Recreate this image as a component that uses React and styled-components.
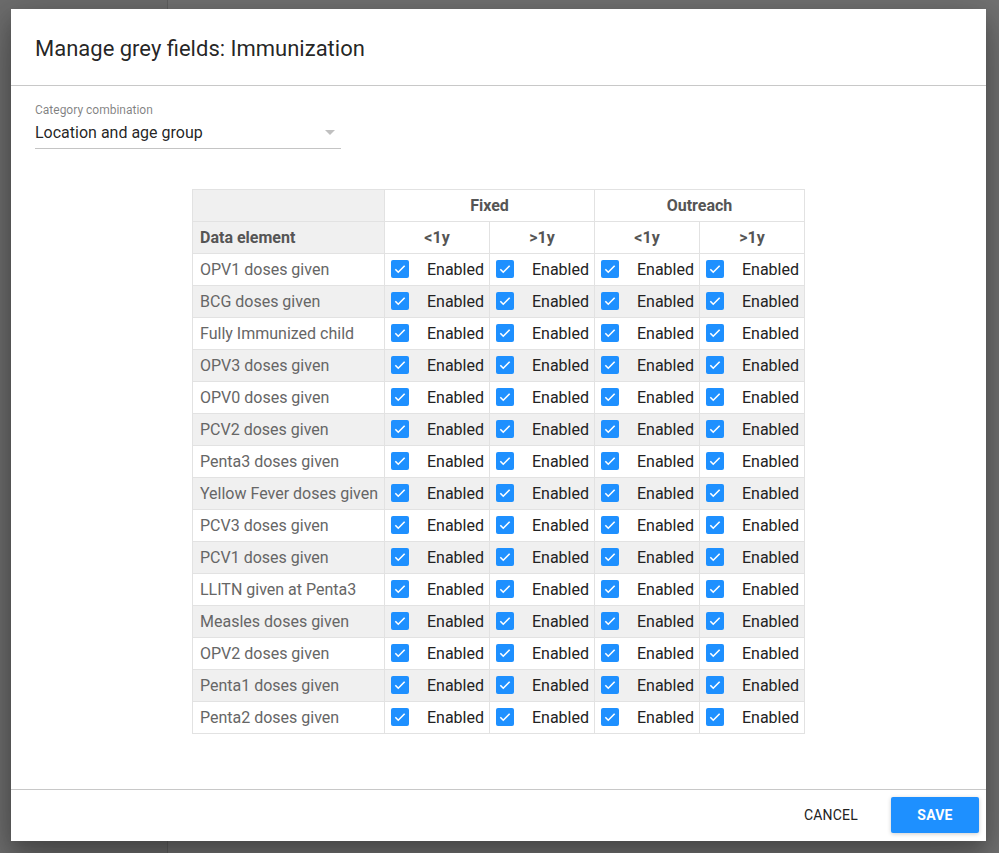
import React from "react";
import styled, { createGlobalStyle } from "styled-components";

const GlobalStyle = createGlobalStyle`
  html, body {
    margin: 0;
    padding: 0;
    background: #707070;
    font-family: Roboto, "Noto Sans", "Liberation Sans", sans-serif;
  }
`;

const Backdrop = styled.div`
  position: relative;
  width: 999px;
  height: 853px;
  box-sizing: border-box;
  padding: 9px 0 0 11px;
  background: linear-gradient(90deg, #6c6c6c 0, #6c6c6c 167px, #5f5f5f 167px, #5f5f5f 168px, #717171 168px);
  overflow: hidden;
`;

const Dialog = styled.div`
  width: 975px;
  height: 832px;
  background: #fff;
  display: flex;
  flex-direction: column;
  box-shadow: 0 14px 45px rgba(0, 0, 0, 0.25), 0 10px 18px rgba(0, 0, 0, 0.22);
`;

const Header = styled.div`
  padding: 24px 24px 20px;
  border-bottom: 1px solid #c8c8c8;
`;

const Title = styled.h3`
  margin: 0;
  font-size: 22px;
  line-height: 32px;
  font-weight: 400;
  color: rgba(0, 0, 0, 0.87);
`;

const Body = styled.div`
  flex: 1;
  padding: 16px 24px 0;
  display: flex;
  flex-direction: column;
`;

const Field = styled.div`
  width: 306px;
`;

const FieldLabel = styled.div`
  font-size: 12px;
  line-height: 16px;
  color: rgba(0, 0, 0, 0.5);
`;

const SelectBox = styled.div`
  display: flex;
  align-items: center;
  justify-content: space-between;
  height: 29px;
  padding-bottom: 1px;
  border-bottom: 1px solid #c4c4c4;
  font-size: 16px;
  color: rgba(0, 0, 0, 0.87);
  padding-right: 6px;
`;

const Arrow = styled.span`
  width: 0;
  height: 0;
  border-left: 5px solid transparent;
  border-right: 5px solid transparent;
  border-top: 5px solid #c0c0c0;
`;

const Table = styled.table`
  margin: 40px auto 0;
  border-collapse: collapse;
  width: 612px;
  table-layout: fixed;
  font-size: 16px;
`;

const HeadCell = styled.th`
  height: 31px;
  padding: 0 7px;
  border: 1px solid #e2e2e2;
  font-size: 16px;
  font-weight: 700;
  color: #555;
  text-align: ${(p) => (p.$left ? "left" : "center")};
  background: ${(p) => (p.$grey ? "#f0f0f0" : "#fff")};
`;

const Row = styled.tr`
  background: ${(p) => (p.$odd ? "#f0f0f0" : "#fff")};
`;

const NameCell = styled.td`
  height: 31px;
  padding: 0 7px;
  border: 1px solid #e2e2e2;
  color: #666;
  white-space: nowrap;
`;

const ToggleCell = styled.td`
  height: 31px;
  padding: 0 5px 0 6px;
  border: 1px solid #e2e2e2;
`;

const Toggle = styled.label`
  display: flex;
  align-items: center;
  justify-content: space-between;
  color: #222;
  line-height: 18px;
`;

const Box = styled.span`
  width: 18px;
  height: 18px;
  margin-top: -1px;
  border-radius: 2px;
  background: #1e90ff;
  display: flex;
  align-items: center;
  justify-content: center;
`;

const Footer = styled.div`
  border-top: 1px solid #c8c8c8;
  padding: 7px 7px 8px;
  display: flex;
  justify-content: flex-end;
  gap: 16px;
`;

const Button = styled.button`
  min-width: 88px;
  height: 36px;
  border: none;
  border-radius: 2px;
  padding: 0 16px;
  font-family: inherit;
  font-size: 14px;
  font-weight: ${(p) => (p.$primary ? 700 : 400)};
  letter-spacing: 0.2px;
  color: ${(p) => (p.$primary ? "#fff" : "#222")};
  background: ${(p) => (p.$primary ? "#1e90ff" : "transparent")};
  box-shadow: ${(p) => (p.$primary ? "0 1px 4px rgba(0,0,0,0.2)" : "none")};
  cursor: pointer;
`;

const elements = [
  "OPV1 doses given",
  "BCG doses given",
  "Fully Immunized child",
  "OPV3 doses given",
  "OPV0 doses given",
  "PCV2 doses given",
  "Penta3 doses given",
  "Yellow Fever doses given",
  "PCV3 doses given",
  "PCV1 doses given",
  "LLITN given at Penta3",
  "Measles doses given",
  "OPV2 doses given",
  "Penta1 doses given",
  "Penta2 doses given",
];

const combos = ["fixed-lt1", "fixed-gt1", "out-lt1", "out-gt1"];

const Check = () => (
  <Box>
    <svg width="14" height="14" viewBox="0 0 24 24">
      <path d="M4 12.5l5 5L20 6.5" fill="none" stroke="#fff" strokeWidth="2.8" />
    </svg>
  </Box>
);

const App = () => (
  <>
    <GlobalStyle />
    <Backdrop>
      <Dialog>
        <Header>
          <Title>Manage grey fields: Immunization</Title>
        </Header>
        <Body>
          <Field>
            <FieldLabel>Category combination</FieldLabel>
            <SelectBox>
              Location and age group
              <Arrow />
            </SelectBox>
          </Field>
          <Table>
            <colgroup>
              <col style={{ width: 192 }} />
              <col style={{ width: 105 }} />
              <col style={{ width: 105 }} />
              <col style={{ width: 105 }} />
              <col style={{ width: 105 }} />
            </colgroup>
            <thead>
              <tr>
                <HeadCell $grey />
                <HeadCell colSpan={2}>Fixed</HeadCell>
                <HeadCell colSpan={2}>Outreach</HeadCell>
              </tr>
              <tr>
                <HeadCell $grey $left>Data element</HeadCell>
                <HeadCell>&lt;1y</HeadCell>
                <HeadCell>&gt;1y</HeadCell>
                <HeadCell>&lt;1y</HeadCell>
                <HeadCell>&gt;1y</HeadCell>
              </tr>
            </thead>
            <tbody>
              {elements.map((name, i) => (
                <Row key={name} $odd={i % 2 === 1}>
                  <NameCell>{name}</NameCell>
                  {combos.map((c) => (
                    <ToggleCell key={c}>
                      <Toggle>
                        <Check />
                        Enabled
                      </Toggle>
                    </ToggleCell>
                  ))}
                </Row>
              ))}
            </tbody>
          </Table>
        </Body>
        <Footer>
          <Button>CANCEL</Button>
          <Button $primary>SAVE</Button>
        </Footer>
      </Dialog>
    </Backdrop>
  </>
);

export default App;
